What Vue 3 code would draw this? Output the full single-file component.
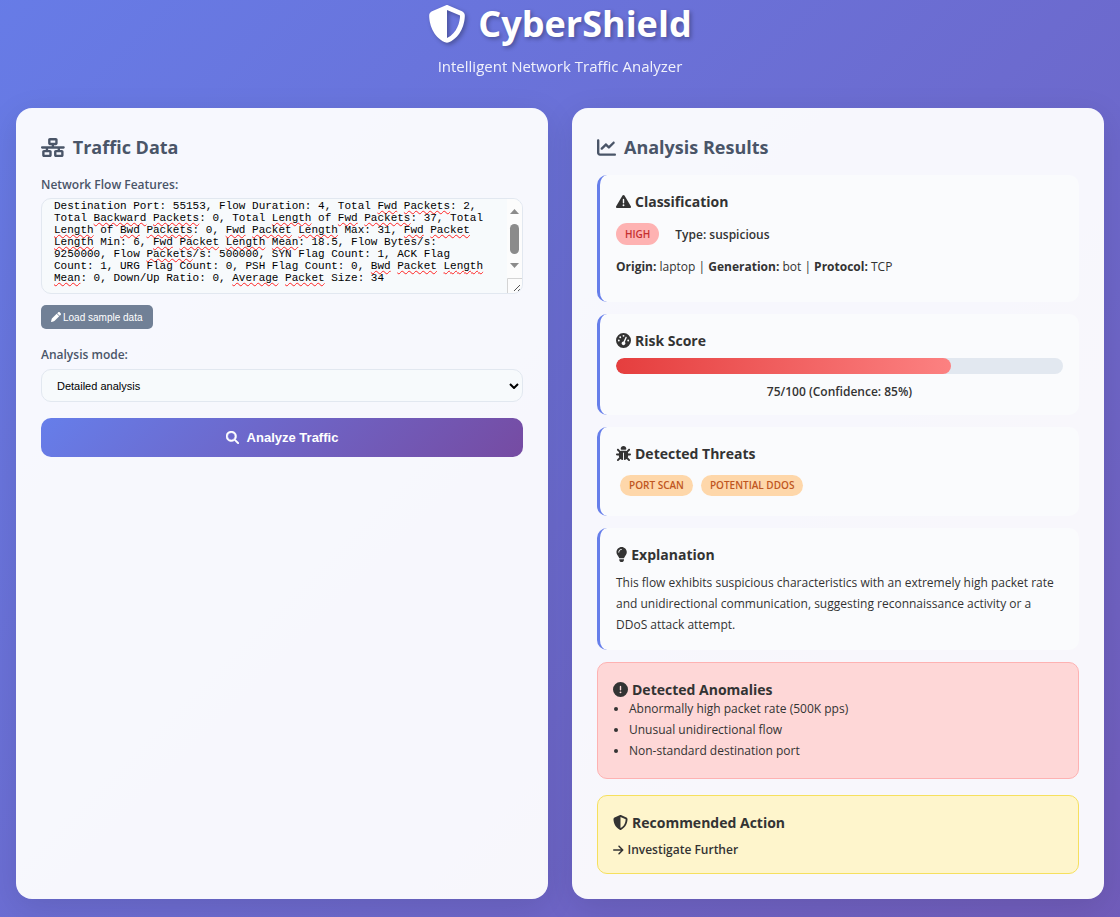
<script setup>
import { ref, computed, h } from 'vue'

const iconSet = {
  shield: [512, 'M256 0c4.6 0 9.2 1 13.4 2.9L457.7 82.8c22 9.3 38.4 31 38.3 57.2c-.5 99.2-41.3 280.7-213.6 363.2c-16.7 8-36.1 8-52.8 0C57.3 420.7 16.5 239.2 16 140c-.1-26.2 16.3-47.9 38.3-57.2L242.7 2.9C246.8 1 251.4 0 256 0zm0 66.8V444.8C394 378 431.1 230.1 432 141.4L256 66.8l0 0z'],
  network: [640, 'M256 64H384v64H256V64zM240 0c-26.5 0-48 21.5-48 48v96c0 26.5 21.5 48 48 48h48v32H32c-17.7 0-32 14.3-32 32s14.3 32 32 32h96v32H80c-26.5 0-48 21.5-48 48v96c0 26.5 21.5 48 48 48H240c26.5 0 48-21.5 48-48V368c0-26.5-21.5-48-48-48H192V288H448v32H400c-26.5 0-48 21.5-48 48v96c0 26.5 21.5 48 48 48H560c26.5 0 48-21.5 48-48V368c0-26.5-21.5-48-48-48H512V288h96c17.7 0 32-14.3 32-32s-14.3-32-32-32H352V192h48c26.5 0 48-21.5 48-48V48c0-26.5-21.5-48-48-48H240zM96 448V384H224v64H96zm320-64H544v64H416V384z'],
  chart: [512, 'M64 64c0-17.7-14.3-32-32-32S0 46.3 0 64V400c0 44.2 35.8 80 80 80H480c17.7 0 32-14.3 32-32s-14.3-32-32-32H80c-8.8 0-16-7.2-16-16V64zm406.6 86.6c12.5-12.5 12.5-32.8 0-45.3s-32.8-12.5-45.3 0L320 210.7l-57.4-57.4c-12.5-12.5-32.8-12.5-45.3 0l-112 112c-12.5 12.5-12.5 32.8 0 45.3s32.8 12.5 45.3 0L240 221.3l57.4 57.4c12.5 12.5 32.8 12.5 45.3 0l128-128z'],
  warning: [512, 'M256 32c14.2 0 27.3 7.5 34.5 19.8l216 368c7.3 12.4 7.3 27.7 .2 40.1S486.3 480 472 480H40c-14.3 0-27.6-7.7-34.7-20.1s-7-27.8 .2-40.1l216-368C228.7 39.5 241.8 32 256 32zm0 128c-13.3 0-24 10.7-24 24V296c0 13.3 10.7 24 24 24s24-10.7 24-24V184c0-13.3-10.7-24-24-24zm32 224a32 32 0 1 0 -64 0 32 32 0 1 0 64 0z'],
  gauge: [512, 'M0 256a256 256 0 1 1 512 0A256 256 0 1 1 0 256zM288 96a32 32 0 1 0 -64 0 32 32 0 1 0 64 0zM256 416c35.3 0 64-28.7 64-64c0-17.4-6.9-33.1-18.1-44.6L366 161.7c5.3-12.1-.2-26.3-12.3-31.6s-26.3 .2-31.6 12.3L257.9 288c-.6 0-1.3 0-1.9 0c-35.3 0-64 28.7-64 64s28.7 64 64 64zM176 144a32 32 0 1 0 -64 0 32 32 0 1 0 64 0zM96 288a32 32 0 1 0 0-64 32 32 0 1 0 0 64zm352-32a32 32 0 1 0 -64 0 32 32 0 1 0 64 0z'],
  bug: [512, 'M256 0c53 0 96 43 96 96v3.6c0 15.7-12.7 28.4-28.4 28.4H188.4c-15.7 0-28.4-12.7-28.4-28.4V96c0-53 43-96 96-96zM41.4 105.4c12.5-12.5 32.8-12.5 45.3 0l64 64c.7 .7 1.3 1.4 1.9 2.1c14.2-7.3 30.4-11.4 47.5-11.4H312c17.1 0 33.2 4.1 47.5 11.4c.6-.7 1.2-1.4 1.9-2.1l64-64c12.5-12.5 32.8-12.5 45.3 0s12.5 32.8 0 45.3l-64 64c-.7 .7-1.4 1.3-2.1 1.9c6.2 12 10.1 25.3 11.1 39.5H480c17.7 0 32 14.3 32 32s-14.3 32-32 32H416c0 24.6-5.5 47.8-15.4 68.6c2.2 1.3 4.2 2.9 6 4.8l64 64c12.5 12.5 12.5 32.8 0 45.3s-32.8 12.5-45.3 0l-63.1-63.1c-24.5 21.8-55.8 36.2-90.3 39.6V240c0-8.8-7.2-16-16-16s-16 7.2-16 16V479.2c-34.5-3.4-65.8-17.8-90.3-39.6L86.6 502.6c-12.5 12.5-32.8 12.5-45.3 0s-12.5-32.8 0-45.3l64-64c1.9-1.9 3.9-3.4 6-4.8C101.5 367.8 96 344.6 96 320H32c-17.7 0-32-14.3-32-32s14.3-32 32-32H96.3c1.1-14.1 5-27.5 11.1-39.5c-.7-.6-1.4-1.2-2.1-1.9l-64-64c-12.5-12.5-12.5-32.8 0-45.3z'],
  bulb: [384, 'M272 384c9.6-31.9 29.5-59.1 49.2-86.2l0 0c5.2-7.1 10.4-14.2 15.4-21.4c19.8-28.5 31.4-63 31.4-100.3C368 78.8 289.2 0 192 0S16 78.8 16 176c0 37.3 11.6 71.9 31.4 100.3c5 7.2 10.2 14.3 15.4 21.4l0 0c19.8 27.1 39.7 54.4 49.2 86.2H272zM192 512c44.2 0 80-35.8 80-80V416H112v16c0 44.2 35.8 80 80 80zM112 176c0 8.8-7.2 16-16 16s-16-7.2-16-16c0-61.9 50.1-112 112-112c8.8 0 16 7.2 16 16s-7.2 16-16 16c-44.2 0-80 35.8-80 80z'],
  alert: [512, 'M256 512A256 256 0 1 0 256 0a256 256 0 1 0 0 512zm0-384c13.3 0 24 10.7 24 24V264c0 13.3-10.7 24-24 24s-24-10.7-24-24V152c0-13.3 10.7-24 24-24zM224 352a32 32 0 1 1 64 0 32 32 0 1 1 -64 0z'],
  arrow: [448, 'M438.6 278.6c12.5-12.5 12.5-32.8 0-45.3l-160-160c-12.5-12.5-32.8-12.5-45.3 0s-12.5 32.8 0 45.3L338.8 224 32 224c-17.7 0-32 14.3-32 32s14.3 32 32 32l306.7 0L233.4 393.4c-12.5 12.5-12.5 32.8 0 45.3s32.8 12.5 45.3 0l160-160z'],
  search: [512, 'M416 208c0 45.9-14.9 88.3-40 122.7L502.6 457.4c12.5 12.5 12.5 32.8 0 45.3s-32.8 12.5-45.3 0L330.7 376c-34.4 25.2-76.8 40-122.7 40C93.1 416 0 322.9 0 208S93.1 0 208 0S416 93.1 416 208zM208 352a144 144 0 1 0 0-288 144 144 0 1 0 0 288z'],
  pen: [512, 'M362.7 19.3L314.3 67.7 444.3 197.7l48.4-48.4c25-25 25-65.5 0-90.5L453.3 19.3c-25-25-65.5-25-90.5 0zm-71 71L58.6 323.5c-10.4 10.4-18 23.3-22.2 37.4L1 481.2C-1.5 489.7 .8 498.8 7 505s15.3 8.5 23.7 6.1l120.3-35.4c14.1-4.2 27-11.8 37.4-22.2L421.7 220.3 291.7 90.3z']
}

// Each glyph is one em high, and as wide as its own view box.
const Icon = ({ name }) => {
  const [w, d] = iconSet[name]
  return h('svg', { viewBox: `0 0 ${w} 512`, height: '1em', width: `${w / 512}em`, fill: 'currentColor', 'aria-hidden': 'true' }, [h('path', { d })])
}
Icon.props = ['name']

const sample = 'Destination Port: 55153, Flow Duration: 4, Total Fwd Packets: 2, Total Backward Packets: 0, Total Length of Fwd Packets: 37, Total Length of Bwd Packets: 0, Fwd Packet Length Max: 31, Fwd Packet Length Min: 6, Fwd Packet Length Mean: 18.5, Flow Bytes/s: 9250000, Flow Packets/s: 500000, SYN Flag Count: 1, ACK Flag Count: 1, URG Flag Count: 0, PSH Flag Count: 0, Bwd Packet Length Mean: 0, Down/Up Ratio: 0, Average Packet Size: 34'
const features = ref(sample)
const mode = ref('detailed')
const score = 75

// The underline layer keeps each word's width with blanks, so it wraps as the text does.
const unknown = /\b(Fwd|Bwd|Backward|Packets?|Length|Mean|Average)\b/
const pieces = computed(() =>
  features.value.split(unknown).map((text, i) => ({ blank: text.replace(/\S/g, '\u00a0'), marked: i % 2 === 1 }))
)

const threats = ['Port Scan', 'Potential DDoS']
const anomalies = ['Abnormally high packet rate (500K pps)', 'Unusual unidirectional flow', 'Non-standard destination port']
</script>

<template>
  <div class="page">
    <header class="hero">
      <h1><Icon name="shield" />CyberShield</h1>
      <p>Intelligent Network Traffic Analyzer</p>
    </header>

    <main class="grid">
      <section class="panel">
        <h2><Icon name="network" />Traffic Data</h2>

        <label for="features">Network Flow Features:</label>
        <div class="editor">
          <div class="marks" aria-hidden="true"><span v-for="(p, i) in pieces" :key="i" :class="{ marked: p.marked }">{{ p.blank }}</span></div>
          <textarea id="features" v-model="features" rows="7" spellcheck="false"></textarea>
          <svg class="scrollbar" width="15" height="94" viewBox="0 0 15 94" aria-hidden="true">
            <rect width="15" height="94" fill="#fcfcfc" />
            <path d="M3 15h9L7.500 10z" fill="#8b8b8b" />
            <rect x="3" y="25" width="9" height="30" rx="4.500" fill="#8b8b8b" />
            <path d="M3 64h9L7.500 69z" fill="#8b8b8b" />
            <path d="M.5 94V79.500H15" fill="none" stroke="#d4d4d4" />
            <path d="M7 92l6-6M11 92l2-2" fill="none" stroke="#555" />
          </svg>
        </div>
        <button type="button" class="sample" @click="features = sample"><Icon name="pen" />Load sample data</button>

        <label for="mode">Analysis mode:</label>
        <div class="select">
          <select id="mode" v-model="mode">
            <option value="detailed">Detailed analysis</option>
            <option value="quick">Quick analysis</option>
          </select>
          <svg width="10" height="6" viewBox="0 0 10 6" aria-hidden="true"><path d="M1 1l4 4 4-4" fill="none" stroke="#000" stroke-width="2" /></svg>
        </div>

        <button type="button" class="analyze"><Icon name="search" />Analyze Traffic</button>
      </section>

      <section class="panel">
        <h2><Icon name="chart" />Analysis Results</h2>

        <div class="results">
          <article class="card classification">
            <h3><Icon name="warning" />Classification</h3>
            <div class="verdict">
              <span class="badge">High</span>
              <span>Type: suspicious</span>
            </div>
            <p><strong>Origin:</strong> laptop | <strong>Generation:</strong> bot | <strong>Protocol:</strong> TCP</p>
          </article>

          <article class="card risk">
            <h3><Icon name="gauge" />Risk Score</h3>
            <div class="bar"><div class="fill" :style="{ width: score + '%' }"></div></div>
            <p class="score">{{ score }}/100 (Confidence: 85%)</p>
          </article>

          <article class="card threats">
            <h3><Icon name="bug" />Detected Threats</h3>
            <div class="tags"><span v-for="t in threats" :key="t" class="tag">{{ t }}</span></div>
          </article>

          <article class="card explanation">
            <h3><Icon name="bulb" />Explanation</h3>
            <p>This flow exhibits suspicious characteristics with an extremely high packet rate and unidirectional communication, suggesting reconnaissance activity or a DDoS attack attempt.</p>
          </article>

          <article class="notice anomalies">
            <h3><Icon name="alert" />Detected Anomalies</h3>
            <ul><li v-for="a in anomalies" :key="a">{{ a }}</li></ul>
          </article>

          <article class="notice action">
            <h3><Icon name="shield" />Recommended Action</h3>
            <p><Icon name="arrow" />Investigate Further</p>
          </article>
        </div>
      </section>
    </main>
  </div>
</template>

<style>
body { margin: 0; }
</style>

<style scoped>
* { box-sizing: border-box; }

.page {
  min-height: 100vh;
  padding: 0 16px 18px;
  background: linear-gradient(135deg, #667eea -8%, #764ba2 155%);
  color: #333;
  font-family: "Segoe UI", "Open Sans", "Noto Sans", sans-serif;
  font-size: 12px;
  line-height: 21px;
}
h1, h2, h3, p, ul { margin: 0; }
svg { flex: none; }

.hero {
  display: flex;
  flex-direction: column;
  align-items: center;
  gap: 8px;
  padding-bottom: 31px;
  color: #fff;
}
.hero h1 {
  display: flex;
  align-items: center;
  gap: 12px;
  font-size: 36px;
  line-height: 48px;
  text-shadow: 2px 2px 4px rgba(0, 0, 0, 0.3);
}
.hero h1 svg {
  font-size: 38px;
  filter: drop-shadow(2px 2px 2px rgba(0, 0, 0, 0.3));
}
.hero p { font-size: 15px; opacity: 0.9; }

.grid {
  display: grid;
  grid-template-columns: 1fr 1fr;
  gap: 24px;
}
.panel {
  padding: 25px;
  border-radius: 16px;
  background: rgba(255, 255, 255, 0.95);
  box-shadow: 0 8px 32px rgba(0, 0, 0, 0.1);
}
h2 {
  display: flex;
  align-items: center;
  gap: 8px;
  margin-bottom: 14px;
  color: #4a5568;
  font-size: 18px;
  line-height: 28px;
}
h2 svg { font-size: 19px; }
.panel label {
  display: block;
  margin-bottom: 4px;
  color: #4a5568;
  font-weight: 600;
  line-height: 19px;
}

.editor {
  position: relative;
  height: 96px;
  border: 1px solid #e2e8f0;
  border-radius: 10px;
  background: #f7fafc;
  overflow: hidden;
}
.editor textarea, .marks {
  display: block;
  width: 100%;
  height: 100%;
  margin: 0;
  padding: 1px 30px 9px 12px;
  border: 0;
  background: transparent;
  color: #000;
  font: 11px/12px "Liberation Mono", monospace;
  white-space: pre-wrap;
  overflow-wrap: break-word;
}
.editor textarea {
  position: relative;
  resize: none;
  outline: none;
  overflow: hidden;
}
.marks {
  position: absolute;
  inset: 0;
}
.marked {
  text-decoration: underline wavy #f22 1px;
  text-decoration-skip-ink: none;
}
.scrollbar { position: absolute; top: 0; right: 0; }

button {
  display: flex;
  align-items: center;
  justify-content: center;
  border: 0;
  color: #fff;
  font-family: "Liberation Sans", Arial, sans-serif;
  cursor: pointer;
}
.sample {
  gap: 2px;
  height: 24px;
  margin: 11px 0 16px;
  padding: 0 10px;
  border-radius: 5px;
  background: #718096;
  font-size: 10px;
}
.select { position: relative; margin: 5px 0 16px; }
.select select {
  display: block;
  width: 100%;
  height: 33px;
  padding: 0 15px;
  border: 1px solid #e2e8f0;
  border-radius: 10px;
  background: #f7fafc;
  color: #000;
  font: 11px "Liberation Sans", Arial, sans-serif;
  appearance: none;
}
.select svg {
  position: absolute;
  top: 14px;
  right: 4px;
  pointer-events: none;
}
.analyze {
  gap: 8px;
  width: 100%;
  height: 39px;
  border-radius: 10px;
  background: linear-gradient(135deg, #667eea 0%, #764ba2 100%);
  font-size: 13px;
  font-weight: 700;
}
.analyze svg {
  stroke: currentColor;
  stroke-width: 20;
}

.results { display: flex; flex-direction: column; gap: 12px; }
.card {
  padding: 16px;
  border-left: 3px solid #667eea;
  border-radius: 10px;
  background: #fafbfd;
}
h3 {
  display: flex;
  align-items: center;
  gap: 4px;
  font-size: 14px;
  line-height: 21px;
}
h3 svg { font-size: 15px; }
.classification { padding-bottom: 25px; }
.verdict {
  display: flex;
  align-items: center;
  gap: 16px;
  margin: 11px 0;
  font-weight: 600;
}
.badge, .tag {
  border-radius: 11px;
  font-weight: 600;
  font-size: 10px;
  text-transform: uppercase;
}
.badge {
  padding: 0 9px;
  background: #feb2b2;
  color: #c53030;
  line-height: 22px;
}
.risk { padding-bottom: 13px; }
.bar {
  height: 16px;
  margin: 7px 0;
  border-radius: 8px;
  background: #e2e8f0;
  overflow: hidden;
}
.fill {
  height: 100%;
  border-radius: 8px;
  background: linear-gradient(90deg, #e53e3e, #fc8181);
}
.score { text-align: center; font-weight: 600; }
.threats { padding-bottom: 20px; }
.tags { display: flex; flex-wrap: wrap; gap: 8px; margin: 11px 4px 0; }
.tag { padding: 0 9px; background: #fed7aa; color: #c05621; }
.explanation { padding-bottom: 15px; }
.explanation p { margin-top: 7px; }

.notice {
  padding: 16px 15px;
  border: 1px solid;
  border-radius: 10px;
}
.anomalies {
  margin-bottom: 4px;
  padding-bottom: 17px;
  border-color: #feb2b2;
  background: #fed7d7;
}
.anomalies ul { margin-top: -2px; padding-left: 16px; }
.action { padding-bottom: 13px; border-color: #f6e05e; background: #fef5cc; }
.action p {
  display: flex;
  align-items: center;
  gap: 4px;
  margin-top: 6px;
  font-weight: 600;
}
</style>
